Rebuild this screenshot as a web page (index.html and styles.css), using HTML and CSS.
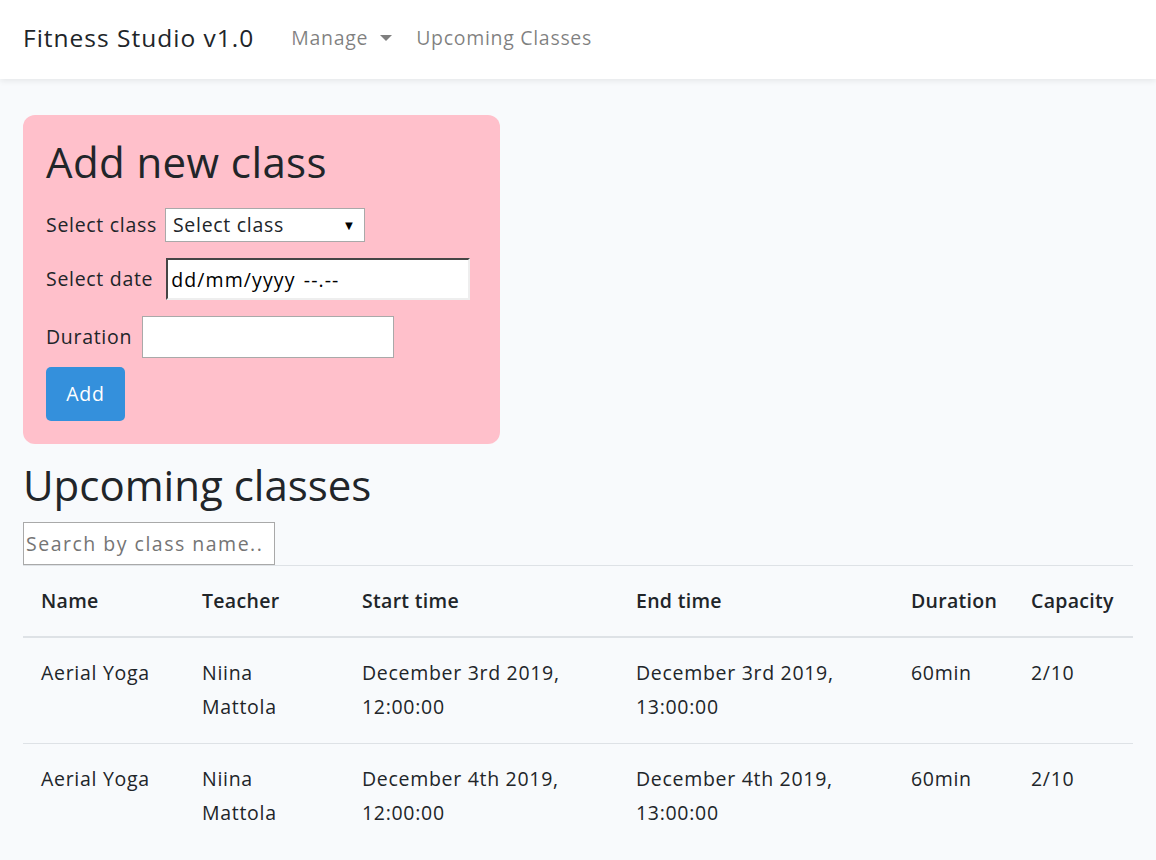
FILE: index.html
```html
<!DOCTYPE html>
<html lang="en">
<head>
<meta charset="utf-8">
<title>Fitness Studio v1.0</title>
<link rel="stylesheet" href="styles.css">
</head>
<body>
<nav class="navbar">
  <div class="container nav-inner">
    <span class="brand">Fitness Studio v1.0</span>
    <span class="nav-link">Manage <span class="caret"></span></span>
    <span class="nav-link">Upcoming Classes</span>
  </div>
</nav>
<main class="container">
  <section class="add-card">
    <h1 class="title">Add new class</h1>
    <div class="form-row row-select">
      <label class="lbl">Select class</label>
      <span class="select-box"><span class="select-text">Select class</span><span class="select-arrow">▼</span></span>
    </div>
    <div class="form-row row-date">
      <label class="lbl">Select date</label>
      <input class="date-input" type="text" value="dd/mm/yyyy --.--" readonly>
    </div>
    <div class="form-row row-duration">
      <label class="lbl">Duration</label>
      <input class="text-input" type="text">
    </div>
    <button class="btn-add">Add</button>
  </section>
  <h1 class="title upcoming">Upcoming classes</h1>
  <input class="search" type="text" placeholder="Search by class name..">
  <table class="table">
    <thead>
      <tr>
        <th class="c-name">Name</th>
        <th class="c-teacher">Teacher</th>
        <th class="c-start">Start time</th>
        <th class="c-end">End time</th>
        <th class="c-dur">Duration</th>
        <th class="c-cap">Capacity</th>
      </tr>
    </thead>
    <tbody>
      <tr>
        <td>Aerial Yoga</td>
        <td>Niina Mattola</td>
        <td>December 3rd 2019, 12:00:00</td>
        <td>December 3rd 2019, 13:00:00</td>
        <td>60min</td>
        <td>2/10</td>
      </tr>
      <tr>
        <td>Aerial Yoga</td>
        <td>Niina Mattola</td>
        <td>December 4th 2019, 12:00:00</td>
        <td>December 4th 2019, 13:00:00</td>
        <td>60min</td>
        <td>2/10</td>
      </tr>
    </tbody>
  </table>
</main>
</body>
</html>
```
FILE: styles.css
```css
* { box-sizing: border-box; }
html, body { margin: 0; padding: 0; }
body {
  background: #f8fafc;
  color: #212529;
  font-family: "Open Sans", "Noto Sans", sans-serif;
  font-size: 19.5px;
  line-height: 34px;
  letter-spacing: 0.7px;
  overflow: hidden;
}
.container {
  width: 1110px;
  margin: 0 auto;
}
.navbar {
  background: #fff;
  height: 79px;
  box-shadow: 0 2px 6px rgba(0,0,0,0.08);
}
.nav-inner {
  display: flex;
  align-items: center;
  height: 76px;
}
.brand {
  font-size: 24.5px;
  letter-spacing: 1px;
  color: #212529;
  margin-right: 37px;
}
.nav-link {
  color: rgba(0,0,0,0.5);
  font-size: 19.5px;
  margin-right: 24px;
  display: inline-flex;
  align-items: center;
}
.caret {
  display: inline-block;
  width: 0; height: 0;
  margin-left: 12px;
  border-top: 6px solid rgba(0,0,0,0.5);
  border-left: 6px solid transparent;
  border-right: 6px solid transparent;
}
.add-card {
  margin-top: 36px;
  width: 477px;
  background: #ffc0cb;
  border-radius: 12px;
  padding: 20px 23px 23px;
}
.title {
  margin: 0;
  font-weight: 400;
  font-size: 42px;
  line-height: 53px;
  letter-spacing: 0.4px;
}
.add-card .title { margin-bottom: 19px; }
.form-row {
  display: flex;
  align-items: center;
  margin-bottom: 16px;
}
.row-select .select-box { margin-top: 1px; }
.row-duration { margin-bottom: 9px; }
.lbl { margin-right: 8px; }
.select-box {
  display: inline-flex;
  align-items: center;
  justify-content: space-between;
  width: 200px;
  height: 34px;
  background: #fff;
  border: 1px solid #a9a9a9;
  padding: 0 8px 0 7px;
}
.select-arrow { font-size: 13px; color: #000; }
.date-input {
  width: 304px;
  height: 42px;
  border: 2px inset #eee;
  border-top-color: #999;
  border-left-color: #999;
  background: #fff;
  font: inherit;
  letter-spacing: 1.1px;
  word-spacing: 2px;
  color: #000;
  padding: 0 3px;
  margin-left: 5px;
}
.text-input {
  width: 252px;
  height: 42px;
  border: 1px solid #a9a9a9;
  background: #fff;
  font: inherit;
  margin-left: 2px;
}
.btn-add {
  display: block;
  width: 79px;
  height: 54px;
  background: #3490dc;
  color: #fff;
  border: 0;
  border-radius: 5px;
  font: inherit;
  letter-spacing: 0.7px;
}
.upcoming { margin-top: 14px; font-size: 42px; letter-spacing: 0; }
.search {
  display: block;
  margin-top: 11px;
  width: 252px;
  height: 43px;
  border: 1px solid #a9a9a9;
  background: #fff;
  font: inherit;
  letter-spacing: 1.5px;
  padding: 0 2px;
}
.search::placeholder { color: #757575; }
.table {
  width: 100%;
  border-collapse: collapse;
  table-layout: fixed;
}
.table th, .table td {
  text-align: left;
  vertical-align: top;
  padding: 18px 18px;
  border-top: 1px solid #dee2e6;
}
.table td { padding-bottom: 19px; }
.table th {
  font-weight: 600;
  letter-spacing: 0.3px;
  border-bottom: 2px solid #dee2e6;
}
.c-name { width: 161px; }
.c-teacher { width: 160px; }
.c-start { width: 274px; }
.c-end { width: 275px; }
.c-dur { width: 120px; }
.c-cap { width: 120px; }
```
